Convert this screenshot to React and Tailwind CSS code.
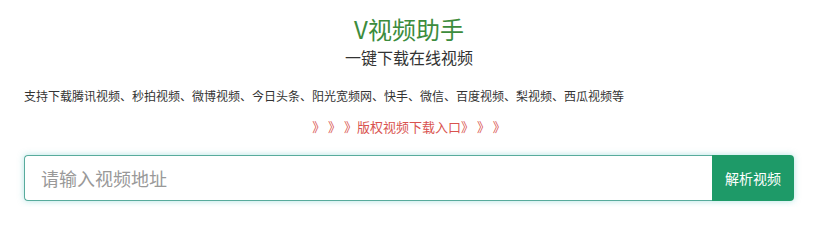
import React from 'react';

const SITES = '支持下载腾讯视频、秒拍视频、微博视频、今日头条、阳光宽频网、快手、微信、百度视频、梨视频、西瓜视频等';

export default function App() {
  return (
    <div className="w-[829px] h-[207px] bg-white overflow-hidden" style={{ fontFamily: '"Microsoft YaHei", "Noto Sans CJK SC", sans-serif' }}>
      <div className="w-[770px] ml-[24px] flex flex-col">
        <h1 className="mt-[12px] text-center text-[24px] leading-[34px] text-[#3c8c3c] font-normal">V视频助手</h1>
        <p className="text-center text-[16px] leading-[22px] text-[#333]">一键下载在线视频</p>
        <p className="mt-[18px] text-[12px] leading-[20px] text-[#333]">{SITES}</p>
        <a className="mt-[11px] self-center text-[13px] leading-[20px] text-[#d9534f] cursor-pointer">》 》 》版权视频下载入口》 》 》</a>
        <div className="mt-[18px] flex h-[46px] rounded-[4px] shadow-[0_0_6px_rgba(102,200,200,0.5)]">
          <input
            className="flex-1 min-w-0 h-full px-[16px] text-[18px] text-[#555] placeholder:text-[#999] border border-[#58ab9c] border-r-0 rounded-l-[4px] outline-none"
            placeholder="请输入视频地址"
          />
          <button className="w-[82px] h-full bg-[#1e9a68] text-white text-[14px] rounded-r-[4px]">解析视频</button>
        </div>
      </div>
    </div>
  );
}
